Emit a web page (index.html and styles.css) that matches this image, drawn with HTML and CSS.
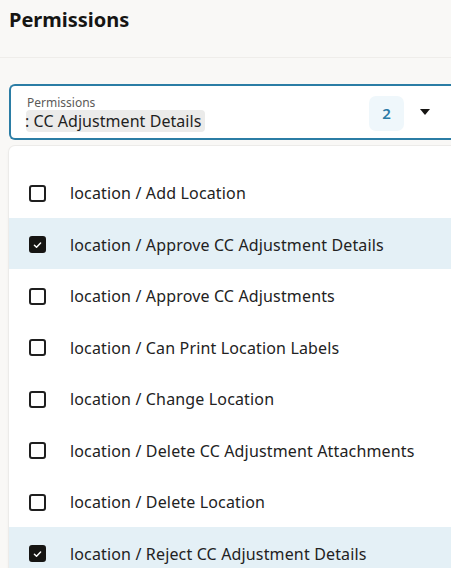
FILE: index.html
```html
<!DOCTYPE html>
<html lang="en">
<head>
<meta charset="utf-8">
<title>Permissions</title>
<link rel="stylesheet" href="styles.css">
</head>
<body>
<header class="page-header">
  <h1 class="page-title">Permissions</h1>
</header>
<main class="content">
  <div class="select-field">
    <div class="select-main">
      <span class="select-label">Permissions</span>
      <div class="select-value"><span class="chip"><span class="chip-cut">:</span> CC Adjustment Details</span></div>
    </div>
    <span class="count-badge">2</span>
    <span class="caret" aria-hidden="true"></span>
  </div>
  <ul class="options">
    <li class="option"><span class="checkbox"></span><span class="option-text">location / Add Location</span></li>
    <li class="option selected"><span class="checkbox checked"><svg viewBox="0 0 16 16" width="16" height="16"><path d="M4.2 8.3 L6.8 10.8 L11.8 5.6" fill="none" stroke="#fff" stroke-width="1.8" stroke-linecap="round" stroke-linejoin="round"/></svg></span><span class="option-text">location / Approve CC Adjustment Details</span></li>
    <li class="option"><span class="checkbox"></span><span class="option-text">location / Approve CC Adjustments</span></li>
    <li class="option"><span class="checkbox"></span><span class="option-text">location / Can Print Location Labels</span></li>
    <li class="option"><span class="checkbox"></span><span class="option-text">location / Change Location</span></li>
    <li class="option"><span class="checkbox"></span><span class="option-text">location / Delete CC Adjustment Attachments</span></li>
    <li class="option"><span class="checkbox"></span><span class="option-text">location / Delete Location</span></li>
    <li class="option selected"><span class="checkbox checked"><svg viewBox="0 0 16 16" width="16" height="16"><path d="M4.2 8.3 L6.8 10.8 L11.8 5.6" fill="none" stroke="#fff" stroke-width="1.8" stroke-linecap="round" stroke-linejoin="round"/></svg></span><span class="option-text">location / Reject CC Adjustment Details</span></li>
  </ul>
</main>
</body>
</html>
```
FILE: styles.css
```css
html, body {
  margin: 0;
  padding: 0;
}
body {
  background: #f9f8f6;
  font-family: "Noto Sans", "Open Sans", sans-serif;
  color: #1f1f1f;
  overflow: hidden;
  height: 568px;
}
.page-header {
  height: 58px;
  border-bottom: 1px solid #efedea;
  padding-left: 9px;
  box-sizing: border-box;
}
.page-title {
  margin: 0;
  padding-top: 6px;
  font-size: 20px;
  font-weight: 700;
  color: #161513;
  line-height: 28px;
}
.content {
  padding: 26px 0 0 9px;
}
.select-field {
  display: flex;
  align-items: center;
  height: 56px;
  box-sizing: border-box;
  border: 2px solid #2b7da5;
  border-right: none;
  border-radius: 6px 0 0 6px;
  background: #fff;
  margin-right: -20px;
  padding-left: 16px;
}
.select-main {
  flex: 1;
  display: flex;
  flex-direction: column;
  min-width: 0;
  padding-top: 4px;
}
.select-label {
  font-size: 12px;
  line-height: 14px;
  color: #5b5a58;
}
.select-value {
  height: 22px;
  margin-left: -1px;
}
.chip {
  display: inline-block;
  background: #ebebea;
  border-radius: 4px;
  font-size: 16px;
  line-height: 22px;
  padding: 0 4px 0 0;
  color: #1f1f1f;
  white-space: nowrap;
  letter-spacing: 0.05px;
}
.chip-cut {
  display: inline-block;
  margin-left: -1px;
}
.count-badge {
  width: 35px;
  height: 35px;
  border-radius: 7px;
  background: #eff7fb;
  color: #2b7aa6;
  font-size: 15px;
  font-weight: 600;
  display: flex;
  align-items: center;
  justify-content: center;
  margin-top: 2px;
  margin-right: -1px;
}
.caret {
  width: 0;
  height: 0;
  border-left: 5.5px solid transparent;
  border-right: 5.5px solid transparent;
  border-top: 6px solid #161513;
  margin: 0 41px 0 17px;
}
.options {
  list-style: none;
  margin: 6px -20px 0 0;
  padding: 20px 0 0 0;
  background: #fff;
  border-radius: 6px 0 0 0;
  box-shadow: 0 0 0 1px #ecebe9, 0 2px 4px rgba(0,0,0,0.05);
}
.option {
  display: flex;
  align-items: center;
  height: 51.5px;
  box-sizing: border-box;
  padding: 3px 0 0 20px;
}
.option.selected {
  background: #e4f0f6;
}
.checkbox {
  width: 17px;
  height: 17px;
  box-sizing: border-box;
  border: 2px solid #1f1f1f;
  border-radius: 3px;
  display: flex;
  align-items: center;
  justify-content: center;
  flex-shrink: 0;
}
.checkbox.checked {
  background: #161513;
  border-color: #161513;
}
.option-text {
  margin-left: 24px;
  font-size: 16px;
  letter-spacing: 0.15px;
  color: #222;
  white-space: nowrap;
}
```
